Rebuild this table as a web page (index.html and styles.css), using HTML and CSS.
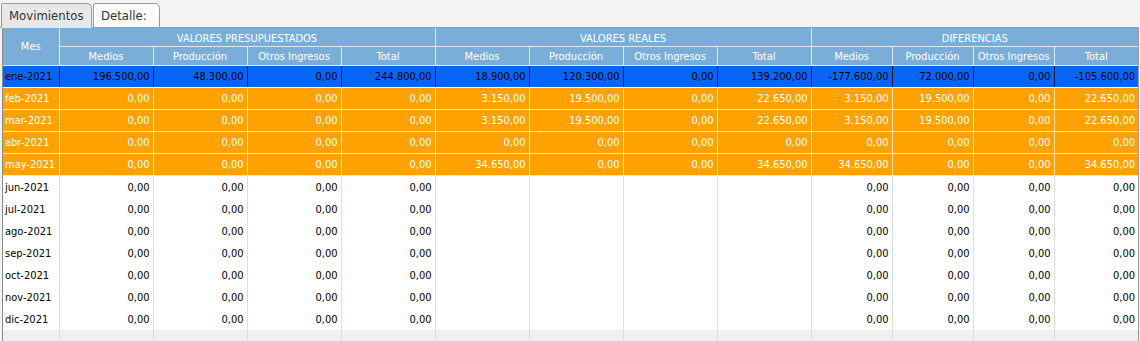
FILE: index.html
```html
<!DOCTYPE html>
<html lang="es">
<head>
<meta charset="utf-8">
<title>Movimientos</title>
<link rel="stylesheet" href="styles.css">
</head>
<body>
<div class="tabs">
  <div class="tab active">Movimientos</div>
  <div class="tab">Detalle:</div>
</div>
<div class="panel">
<table class="grid">
  <colgroup>
    <col class="c-mes">
    <col class="c-w"><col class="c-w"><col class="c-w"><col class="c-w">
    <col class="c-w"><col class="c-w"><col class="c-w"><col class="c-w">
    <col class="c-n"><col class="c-n"><col class="c-n"><col>
  </colgroup>
  <thead>
    <tr class="h1">
      <th rowspan="2" class="mes">Mes</th>
      <th colspan="4">VALORES PRESUPUESTADOS</th>
      <th colspan="4">VALORES REALES</th>
      <th colspan="4">DIFERENCIAS</th>
    </tr>
    <tr class="h2">
      <th>Medios</th><th>Producción</th><th>Otros Ingresos</th><th>Total</th>
      <th>Medios</th><th>Producción</th><th>Otros Ingresos</th><th>Total</th>
      <th>Medios</th><th>Producción</th><th>Otros Ingresos</th><th>Total</th>
    </tr>
  </thead>
  <tbody>
    <tr class="sel">
      <td>ene-2021</td><td>196.500,00</td><td>48.300,00</td><td>0,00</td><td>244.800,00</td>
      <td>18.900,00</td><td>120.300,00</td><td>0,00</td><td>139.200,00</td>
      <td>-177.600,00</td><td>72.000,00</td><td>0,00</td><td>-105.600,00</td>
    </tr>
    <tr class="hl">
      <td>feb-2021</td><td>0,00</td><td>0,00</td><td>0,00</td><td>0,00</td>
      <td>3.150,00</td><td>19.500,00</td><td>0,00</td><td>22.650,00</td>
      <td>3.150,00</td><td>19.500,00</td><td>0,00</td><td>22.650,00</td>
    </tr>
    <tr class="hl">
      <td>mar-2021</td><td>0,00</td><td>0,00</td><td>0,00</td><td>0,00</td>
      <td>3.150,00</td><td>19.500,00</td><td>0,00</td><td>22.650,00</td>
      <td>3.150,00</td><td>19.500,00</td><td>0,00</td><td>22.650,00</td>
    </tr>
    <tr class="hl">
      <td>abr-2021</td><td>0,00</td><td>0,00</td><td>0,00</td><td>0,00</td>
      <td>0,00</td><td>0,00</td><td>0,00</td><td>0,00</td>
      <td>0,00</td><td>0,00</td><td>0,00</td><td>0,00</td>
    </tr>
    <tr class="hl">
      <td>may-2021</td><td>0,00</td><td>0,00</td><td>0,00</td><td>0,00</td>
      <td>34.650,00</td><td>0,00</td><td>0,00</td><td>34.650,00</td>
      <td>34.650,00</td><td>0,00</td><td>0,00</td><td>34.650,00</td>
    </tr>
    <tr>
      <td>jun-2021</td><td>0,00</td><td>0,00</td><td>0,00</td><td>0,00</td>
      <td></td><td></td><td></td><td></td>
      <td>0,00</td><td>0,00</td><td>0,00</td><td>0,00</td>
    </tr>
    <tr>
      <td>jul-2021</td><td>0,00</td><td>0,00</td><td>0,00</td><td>0,00</td>
      <td></td><td></td><td></td><td></td>
      <td>0,00</td><td>0,00</td><td>0,00</td><td>0,00</td>
    </tr>
    <tr>
      <td>ago-2021</td><td>0,00</td><td>0,00</td><td>0,00</td><td>0,00</td>
      <td></td><td></td><td></td><td></td>
      <td>0,00</td><td>0,00</td><td>0,00</td><td>0,00</td>
    </tr>
    <tr>
      <td>sep-2021</td><td>0,00</td><td>0,00</td><td>0,00</td><td>0,00</td>
      <td></td><td></td><td></td><td></td>
      <td>0,00</td><td>0,00</td><td>0,00</td><td>0,00</td>
    </tr>
    <tr>
      <td>oct-2021</td><td>0,00</td><td>0,00</td><td>0,00</td><td>0,00</td>
      <td></td><td></td><td></td><td></td>
      <td>0,00</td><td>0,00</td><td>0,00</td><td>0,00</td>
    </tr>
    <tr>
      <td>nov-2021</td><td>0,00</td><td>0,00</td><td>0,00</td><td>0,00</td>
      <td></td><td></td><td></td><td></td>
      <td>0,00</td><td>0,00</td><td>0,00</td><td>0,00</td>
    </tr>
    <tr>
      <td>dic-2021</td><td>0,00</td><td>0,00</td><td>0,00</td><td>0,00</td>
      <td></td><td></td><td></td><td></td>
      <td>0,00</td><td>0,00</td><td>0,00</td><td>0,00</td>
    </tr>
    <tr class="filler">
      <td></td><td></td><td></td><td></td><td></td><td></td><td></td>
      <td></td><td></td><td></td><td></td><td></td><td></td>
    </tr>
  </tbody>
</table>
</div>
</body>
</html>
```
FILE: styles.css
```css
html, body {
  margin: 0;
  padding: 0;
  background: #f3f3f3;
  font-family: "DejaVu Sans Condensed", "DejaVu Sans", sans-serif;
  font-size: 11px;
  color: #000;
  overflow: hidden;
}

.tabs {
  display: flex;
  align-items: flex-end;
  height: 28px;
  padding-left: 1px;
  box-sizing: border-box;
  border-bottom: 1px solid #999;
  width: 1139px;
}

.tab {
  box-sizing: border-box;
  height: 25px;
  margin-bottom: -1px;
  border: 1px solid #999;
  border-radius: 2px 5px 0 0;
  background: #fbfbfb;
  color: #333;
  font-size: 13px;
  line-height: 24px;
  padding: 0 7px;
  margin-right: 1px;
}

.tab.active {
  background: #e8e8e8;
  border-bottom-color: #e8e8e8;
  width: 91px;
}

.tab:not(.active) {
  width: 67px;
}

.panel {
  margin-left: 2px;
  width: 1137px;
  height: 313px;
  overflow: hidden;
  box-sizing: border-box;
  border-left: 1px solid #8a8a8a;
  border-right: 1px solid #9a9a9a;
  background: #f0f0f0;
}

.grid {
  width: 1135px;
  border-collapse: collapse;
  table-layout: fixed;
}

.c-mes { width: 56px; }
.c-w { width: 94px; }
.c-n { width: 81px; }

.grid th {
  background: #7aaed9;
  color: #fff;
  font-weight: normal;
  text-align: center;
  padding: 0;
  border: 1px solid #dde8f2;
  white-space: nowrap;
  overflow: hidden;
}

.grid tr.h1 th {
  border-top: none;
  height: 15px;
  padding-top: 3px;
}

.grid tr.h1 th.mes {
  padding-top: 0;
}

.grid tr.h2 th {
  height: 18px;
}

.grid th:first-child { border-left: none; }
.grid th:last-child { border-right: none; }

.grid td {
  height: 22px;
  padding: 0 3px 0 4px;
  text-align: right;
  white-space: nowrap;
  overflow: hidden;
  border-left: 1px solid #dedede;
  border-right: 1px solid #dedede;
  background: #fff;
}

.grid td:first-child {
  text-align: left;
  padding-left: 2px;
  border-left: none;
}

.grid td:last-child { border-right: none; }

.grid tr.sel td {
  height: 21px;
  background: #0766f7;
  color: #000;
  border-left-color: #1a1a1a;
  border-right-color: #1a1a1a;
  border-bottom: 1px solid #fff;
}

.grid tr.hl td {
  height: 21px;
  background: #ffa200;
  color: #fff;
  border: 1px solid #fbe2b8;
  border-top: none;
}

.grid tr.hl td:first-child { border-left: none; }
.grid tr.hl td:last-child { border-right: none; }

.grid tr.filler td {
  height: 30px;
  background: #f0f0f0;
  border-left-color: #dedede;
  border-right-color: #dedede;
}
```
